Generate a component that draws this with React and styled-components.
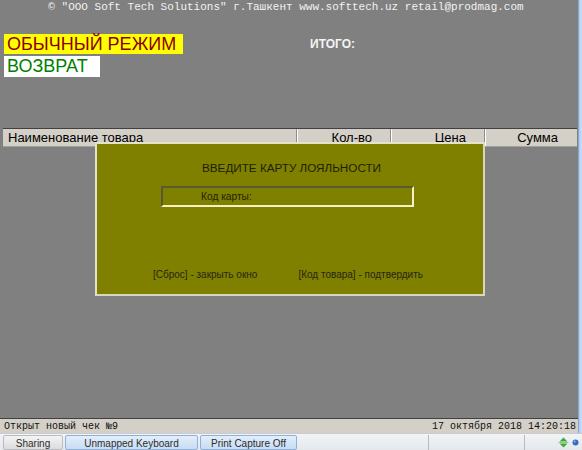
import styled, { createGlobalStyle } from "styled-components";

const GlobalStyle = createGlobalStyle`
  html, body {
    margin: 0;
    padding: 0;
    background: #808080;
  }
  * {
    box-sizing: border-box;
  }
`;

const Desktop = styled.div`
  width: 582px;
  height: 450px;
  display: flex;
  flex-direction: column;
  overflow: hidden;
  font-family: "Liberation Sans", Arial, sans-serif;
`;

const Screen = styled.div`
  flex: 1;
  display: flex;
  min-height: 0;
`;

const Main = styled.div`
  flex: 1;
  position: relative;
  display: flex;
  flex-direction: column;
  background: #808080;
`;

const FrameEdge = styled.div`
  width: 4px;
  background: linear-gradient(to right, #5f88b8 0, #a9c9ec 1px, #c4dcf4 3px);
`;

const Banner = styled.div`
  height: 14px;
  line-height: 14px;
  text-align: center;
  font-family: "Liberation Mono", "Courier New", monospace;
  font-size: 11px;
  color: #f2f2f2;
  padding-right: 6px;
`;

const TopArea = styled.div`
  display: flex;
  align-items: flex-start;
  margin-top: 20px;
  padding-left: 4px;
`;

const Modes = styled.div`
  display: flex;
  flex-direction: column;
  align-items: flex-start;
  gap: 2px;
  width: 306px;
`;

const ModeBadge = styled.div`
  height: ${(p) => p.$h}px;
  line-height: ${(p) => p.$h}px;
  padding: 0 ${(p) => p.$pad}px 0 3px;
  background: ${(p) => p.$bg};
  color: ${(p) => p.$fg};
  font-size: 18px;
`;

const Total = styled.div`
  margin-top: 3px;
  color: #f4f4f4;
  font-size: 12px;
  font-weight: bold;
`;

const TableHead = styled.div`
  display: grid;
  grid-template-columns: 294px 94px 94px 1fr;
  margin: 51px 1px 0 3px;
  height: 19px;
  background: #d4d0c8;
  border-top: 1px solid #404040;
  border-bottom: 1px solid #a0a0a0;
`;

const HeadCell = styled.div`
  font-size: 13px;
  line-height: 17px;
  color: #000;
  text-align: ${(p) => (p.$left ? "left" : "right")};
  padding: ${(p) => (p.$left ? "0 0 0 5px" : "0 19px 0 0")};
  border-left: ${(p) => (p.$left ? "none" : "1px solid #ffffff")};
  box-shadow: ${(p) => (p.$left ? "none" : "-1px 0 0 #8c8c8c")};
`;

const Body = styled.div`
  flex: 1;
`;

const Dialog = styled.div`
  position: absolute;
  left: 95px;
  top: 142px;
  width: 390px;
  height: 154px;
  background: #808000;
  border: 2px solid #e4e2c8;
  border-right-color: #d8d6bc;
  border-bottom-color: #d8d6bc;
  display: flex;
  flex-direction: column;
  align-items: center;
`;

const DialogTitle = styled.div`
  margin-top: 17px;
  font-size: 11.7px;
  color: #1e1e00;
  padding-left: 3px;
`;

const CardField = styled.div`
  margin-top: 12px;
  margin-right: 5px;
  width: 253px;
  height: 21px;
  border: 2px solid #f4f2c4;
  border-top-color: #5a5a32;
  border-left-color: #5a5a32;
  font-size: 10.2px;
  line-height: 17px;
  color: #242400;
  padding-left: 38px;
`;

const Hints = styled.div`
  margin-top: 62px;
  width: 100%;
  display: flex;
  padding-left: 56px;
  gap: 41px;
  font-size: 10px;
  color: #262610;
`;

const StatusBar = styled.div`
  height: 15px;
  display: flex;
  justify-content: space-between;
  align-items: center;
  background: #d4d0c8;
  border-top: 1px solid #404040;
  padding: 0 2px 0 4px;
  font-family: "Liberation Mono", "Courier New", monospace;
  font-size: 10px;
  color: #111;
`;

const Taskbar = styled.div`
  height: 17px;
  display: flex;
  align-items: stretch;
  gap: 2px;
  padding: 1px 0 0 3px;
  background: linear-gradient(#f2f4f6, #e4e8ec);
  border-top: 1px solid #c8ccd2;
`;

const TaskButton = styled.div`
  width: ${(p) => p.$w}px;
  font-size: 10px;
  line-height: 15px;
  text-align: center;
  color: #2c2c2c;
  border: 1px solid ${(p) => (p.$active ? "#8fb0d8" : "#b8bcc2")};
  border-radius: 2px;
  background: ${(p) =>
    p.$active
      ? "linear-gradient(#e2eefb, #c8dcf4)"
      : "linear-gradient(#f4f4f4, #dcdcdc)"};
`;

const TraySlot = styled.div`
  width: ${(p) => p.$w}px;
  border-right: 1px solid #b8bcc2;
`;

const Tray = styled.div`
  flex: 1;
  display: flex;
  align-items: center;
  justify-content: flex-end;
  gap: 3px;
  padding-right: 3px;
`;

const ArrowsIcon = () => (
  <svg width="11" height="11" viewBox="0 0 11 11">
    <path d="M5.5 0.5 L9.5 4.5 H1.5 Z" fill="#3faa3a" />
    <path d="M5.5 10.5 L9.5 6.5 H1.5 Z" fill="#3faa3a" />
    <rect x="0.5" y="5" width="10" height="1" fill="#8ccf7a" />
  </svg>
);

const Dot = () => (
  <svg width="7" height="7" viewBox="0 0 7 7">
    <circle cx="3.5" cy="3.5" r="3" fill="#2f6fc6" />
    <circle cx="2.6" cy="2.6" r="1" fill="#8fb8ee" />
  </svg>
);

export default function App() {
  return (
    <>
      <GlobalStyle />
      <Desktop>
        <Screen>
          <Main>
            <Banner>
              © "ООО Soft Tech Solutions" г.Ташкент www.softtech.uz retail@prodmag.com
            </Banner>
            <TopArea>
              <Modes>
                <ModeBadge $h={20} $pad={7} $bg="#ffff00" $fg="#8b0000">
                  ОБЫЧНЫЙ РЕЖИМ
                </ModeBadge>
                <ModeBadge $h={21} $pad={12} $bg="#ffffff" $fg="#008000">
                  ВОЗВРАТ
                </ModeBadge>
              </Modes>
              <Total>ИТОГО:</Total>
            </TopArea>
            <TableHead>
              <HeadCell $left>Наименование товара</HeadCell>
              <HeadCell>Кол-во</HeadCell>
              <HeadCell>Цена</HeadCell>
              <HeadCell>Сумма</HeadCell>
            </TableHead>
            <Body />
            <StatusBar>
              <span>Открыт новый чек №9</span>
              <span>17 октября 2018 14:20:18</span>
            </StatusBar>
            <Dialog>
              <DialogTitle>ВВЕДИТЕ КАРТУ ЛОЯЛЬНОСТИ</DialogTitle>
              <CardField>Код карты:</CardField>
              <Hints>
                <span>[Сброс] - закрыть окно</span>
                <span>[Код товара] - подтвердить</span>
              </Hints>
            </Dialog>
          </Main>
          <FrameEdge />
        </Screen>
        <Taskbar>
          <TaskButton $w={60}>Sharing</TaskButton>
          <TaskButton $w={133} $active>
            Unmapped Keyboard
          </TaskButton>
          <TaskButton $w={97} $active>
            Print Capture Off
          </TaskButton>
          <TraySlot $w={130} />
          <TraySlot $w={94} />
          <Tray>
            <ArrowsIcon />
            <Dot />
          </Tray>
        </Taskbar>
      </Desktop>
    </>
  );
}
